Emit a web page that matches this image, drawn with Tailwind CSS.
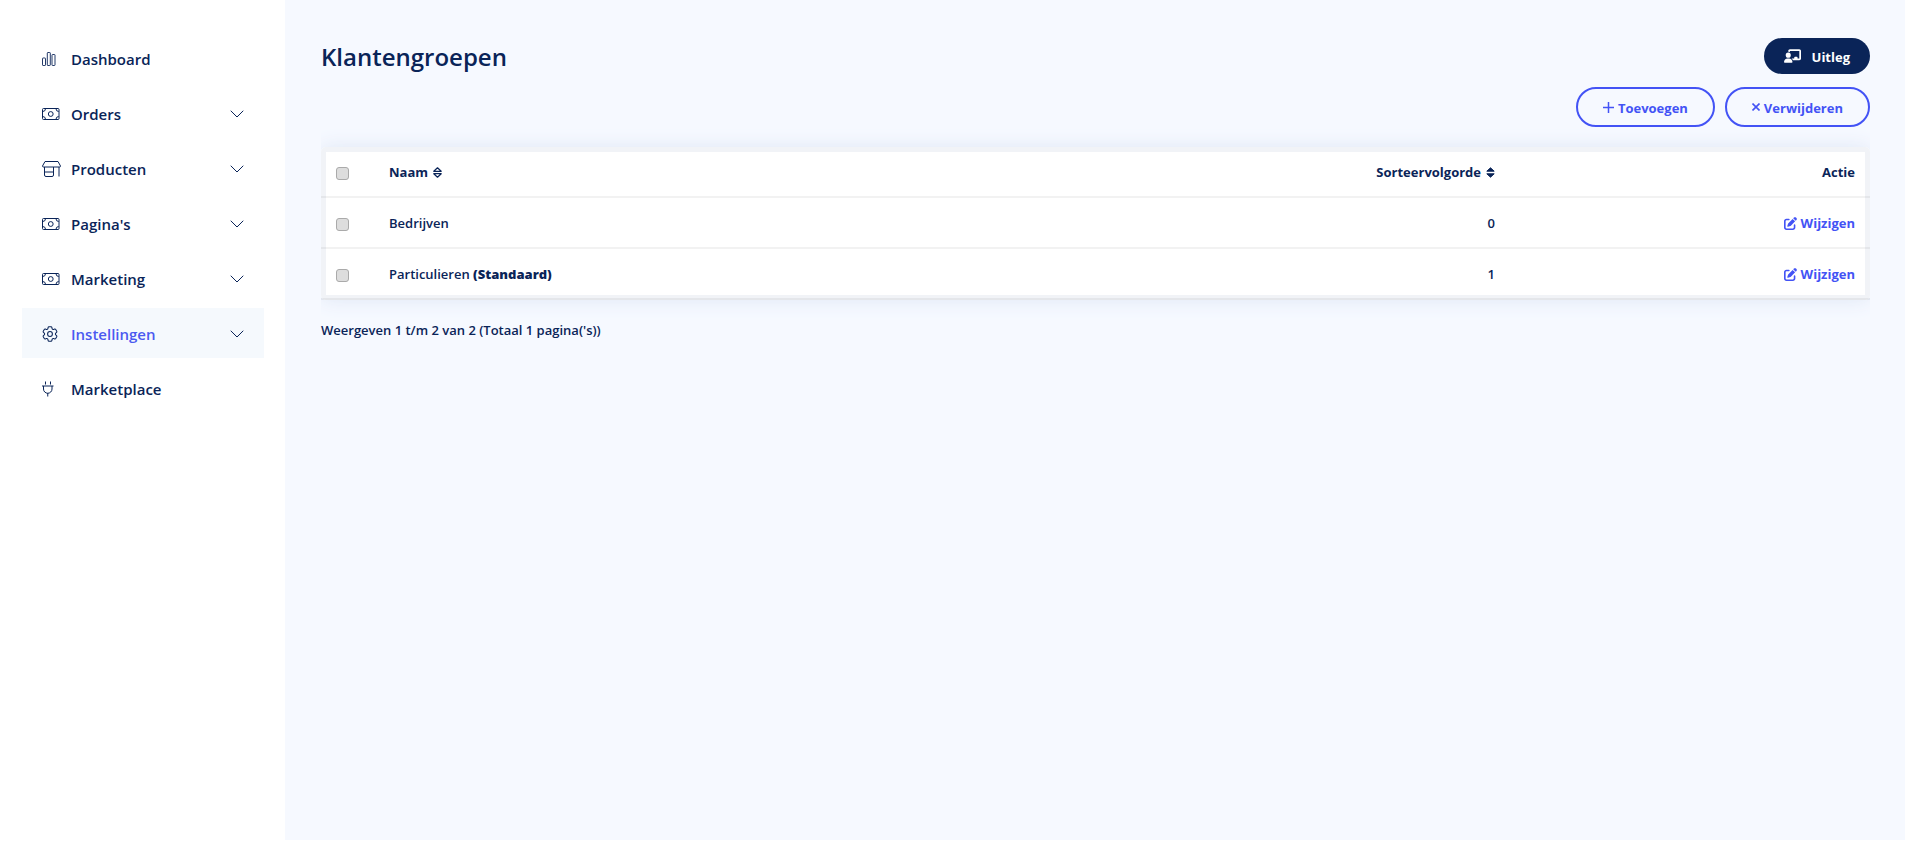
<!DOCTYPE html>
<html lang="nl">
<head>
<meta charset="utf-8">
<meta name="viewport" content="width=device-width, initial-scale=1">
<title>Klantengroepen</title>
<script src="https://cdn.jsdelivr.net/npm/@tailwindcss/browser@4"></script>
</head>
<body class="flex min-h-screen bg-white font-['Open_Sans',sans-serif] text-[13px] font-semibold text-[#0a2458]">
<svg class="hidden" aria-hidden="true">
  <symbol id="chevron" viewBox="0 0 14 8"><path d="M1 1l6 6 6-6" fill="none" stroke="currentColor" stroke-linecap="round" stroke-linejoin="round"/></symbol>
  <symbol id="cash" viewBox="0 0 18 12"><g fill="none" stroke="currentColor"><rect x=".5" y=".5" width="16.5" height="11" rx="1"/><circle cx="8.75" cy="6" r="2.4"/><path d="M3.5.8A2.8 2.8 0 0 1 .8 3.5M14 .8a2.8 2.8 0 0 0 2.7 2.7M3.5 11.2A2.8 2.8 0 0 0 .8 8.500M14 11.200a2.800 2.800 0 0 1 2.700-2.700"/></g></symbol>
  <symbol id="pen" viewBox="0 0 512 512"><path fill="currentColor" d="M471.6 21.7c-21.9-21.9-57.3-21.9-79.2 0L362.300 51.700l97.900 97.900 30.100-30.100c21.900-21.900 21.900-57.300 0-79.200L471.600 21.700zm-299.200 220c-6.100 6.100-10.800 13.600-13.500 21.900l-29.600 88.800c-2.900 8.600-.6 18.100 5.800 24.600s15.900 8.700 24.600 5.800l88.800-29.600c8.200-2.700 15.700-7.400 21.900-13.500L437.700 172.300 339.700 74.300 172.400 241.700zM96 64C43 64 0 107 0 160V416c0 53 43 96 96 96H352c53 0 96-43 96-96V320c0-17.700-14.300-32-32-32s-32 14.300-32 32v96c0 17.700-14.300 32-32 32H96c-17.700 0-32-14.300-32-32V160c0-17.700 14.300-32 32-32h96c17.700 0 32-14.300 32-32s-14.300-32-32-32H96z"/></symbol>
</svg>

<nav class="w-[285px] shrink-0 pt-[33px] pr-[21px] pl-[22px]">
  <ul class="flex flex-col gap-[5px] text-[15px]">
    <li><a href="#" class="flex h-[50px] items-center px-5 pt-[2px]">
      <span class="w-[29px]"><svg class="h-[14px] w-[14px]" viewBox="0 0 14 14" fill="none" stroke="currentColor" stroke-width=".9"><rect x=".5" y="6" width="3" height="7.500" rx=".6"/><rect x="5.300" y=".5" width="3" height="13" rx=".6"/><rect x="10" y="2.500" width="3" height="11" rx=".6"/></svg></span>Dashboard</a></li>
    <li><a href="#" class="flex h-[50px] items-center px-5 pt-[2px]"><span class="w-[29px]"><svg class="h-3 w-[18px]"><use href="#cash"/></svg></span><span class="grow">Orders</span><svg class="h-2 w-[14px]"><use href="#chevron"/></svg></a></li>
    <li><a href="#" class="flex h-[50px] items-center px-5 pt-[2px]">
      <span class="w-[29px]"><svg class="h-4 w-[19px]" viewBox="0 0 19 16" fill="none" stroke="currentColor" stroke-linejoin="round"><path d="M3 .5h13l2.500 4.500q0 1-1 1H1.500q-1 0-1-1zM2.500 6v8q0 1.500 1.500 1.500h6q1.500 0 1.500-1.500V6M2.500 11h9M17 6v9.500"/></svg></span><span class="grow">Producten</span><svg class="h-2 w-[14px]"><use href="#chevron"/></svg></a></li>
    <li><a href="#" class="flex h-[50px] items-center px-5 pt-[2px]"><span class="w-[29px]"><svg class="h-3 w-[18px]"><use href="#cash"/></svg></span><span class="grow">Pagina's</span><svg class="h-2 w-[14px]"><use href="#chevron"/></svg></a></li>
    <li><a href="#" class="flex h-[50px] items-center px-5 pt-[2px]"><span class="w-[29px]"><svg class="h-3 w-[18px]"><use href="#cash"/></svg></span><span class="grow">Marketing</span><svg class="h-2 w-[14px]"><use href="#chevron"/></svg></a></li>
    <li><a href="#" class="flex h-[50px] items-center bg-[#f5f9fd] px-5 pt-[2px]">
      <span class="w-[29px]"><svg class="h-4 w-4" viewBox="2 2 20 20" fill="none" stroke="currentColor" stroke-width="1.300"><path d="M9.594 3.940c.09-.542.56-.94 1.110-.94h2.593c.55 0 1.020.398 1.110.94l.213 1.281c.063.374.313.686.645.87.074.04.147.083.22.127.325.196.72.257 1.075.124l1.217-.456a1.125 1.125 0 0 1 1.370.49l1.296 2.247a1.125 1.125 0 0 1-.26 1.431l-1.003.827c-.293.241-.438.613-.43.992a7.723 7.723 0 0 1 0 .255c-.008.378.137.75.43.991l1.004.827c.424.35.534.955.26 1.430l-1.298 2.247a1.125 1.125 0 0 1-1.369.491l-1.217-.456c-.355-.133-.75-.072-1.076.124a6.470 6.470 0 0 1-.22.128c-.331.183-.581.495-.644.869l-.213 1.281c-.09.543-.56.94-1.110.94h-2.594c-.55 0-1.019-.398-1.110-.94l-.213-1.281c-.062-.374-.312-.686-.644-.87a6.520 6.520 0 0 1-.22-.127c-.325-.196-.72-.257-1.076-.124l-1.217.456a1.125 1.125 0 0 1-1.369-.49l-1.297-2.247a1.125 1.125 0 0 1 .26-1.431l1.004-.827c.292-.24.437-.613.43-.991a6.932 6.932 0 0 1 0-.255c.007-.38-.138-.751-.43-.992l-1.004-.827a1.125 1.125 0 0 1-.26-1.430l1.297-2.247a1.125 1.125 0 0 1 1.370-.491l1.216.456c.356.133.751.072 1.076-.124.072-.044.146-.086.22-.128.332-.183.582-.495.644-.869l.214-1.280Z"/><circle cx="12" cy="12" r="3"/></svg></span><span class="grow text-[#4b5af0]">Instellingen</span><svg class="h-2 w-[14px]"><use href="#chevron"/></svg></a></li>
    <li><a href="#" class="flex h-[50px] items-center px-5 pt-[2px]">
      <span class="w-[29px]"><svg class="h-4 w-3" viewBox="0 0 12 16" fill="none" stroke="currentColor"><path d="M3.500.5v3M8.500.5v3M0 5h11.500M1.500 5v3a4.200 4.200 0 0 0 8.500 0V5M5.750 12v3.500"/></svg></span>Marketplace</a></li>
  </ul>
</nav>

<main class="mb-[23px] min-w-0 grow bg-[#f6f9ff] pt-[38px] pr-[35px] pl-9">
  <header class="flex h-9 items-center justify-between">
    <h1 class="pt-[2px] text-2xl font-semibold">Klantengroepen</h1>
    <a href="#" class="flex h-9 items-center gap-[11px] rounded-full bg-[#0a2458] px-5 font-bold text-white"><svg class="h-[14px] w-[17px]" viewBox="0 0 640 512" fill="currentColor"><path d="M160 64c0-35.300 28.700-64 64-64H576c35.300 0 64 28.700 64 64V352c0 35.300-28.700 64-64 64H336.800c-11.800-25.500-29.900-47.500-52.400-64H384V320c0-17.700 14.300-32 32-32h64c17.700 0 32 14.300 32 32v32h64V64L224 64v49.100C205.200 102.200 183.300 96 160 96V64zm0 64a96 96 0 1 1 0 192 96 96 0 1 1 0-192zM133.300 352h53.300C260.300 352 320 411.700 320 485.300c0 14.700-11.900 26.700-26.700 26.700H26.700C11.900 512 0 500.100 0 485.300C0 411.700 59.700 352 133.300 352z"/></svg><span class="pt-[3px]">Uitleg</span></a>
  </header>
  <div class="mt-[13px] flex justify-end gap-[10px] font-bold text-[#4353f5]">
    <button type="button" class="flex h-10 items-center gap-1 rounded-full border-2 border-current px-[25px]"><svg class="h-[11px] w-[11px]" viewBox="0 0 11 11" stroke="currentColor" stroke-width="1.500"><path d="M5.500 0v11M0 5.500h11"/></svg><span class="pt-[3px]">Toevoegen</span></button>
    <button type="button" class="flex h-10 items-center gap-1 rounded-full border-2 border-current px-[25px]"><svg class="h-2 w-2" viewBox="0 0 8 8" stroke="currentColor" stroke-width="1.600"><path d="M.5.5l7 7M7.500.5l-7 7"/></svg><span class="pt-[3px]">Verwijderen</span></button>
  </div>
  <div class="overflow-hidden pt-5 pb-5">
    <table class="w-full table-fixed border-separate border-spacing-0 rounded-[5px] bg-white shadow-[0_0_20px_#dfe7f5,inset_0_0_0_5px_#f1f3f7]">
      <thead>
        <tr class="h-[51px]">
          <th class="w-[53px] border-b-2 border-black/5 pt-[3px] pl-[15px] text-left"><input type="checkbox" aria-label="Alles selecteren" class="block h-[13px] w-[13px] appearance-none rounded-[3px] border border-[#aaa] bg-[#ddd]"></th>
          <th class="border-b-2 border-black/5 px-[15px] pt-[3px] text-left font-bold"><a href="#" class="flex items-center gap-[5px]">Naam <svg class="mb-[2px] h-[11px] w-[9px]" viewBox="0 0 9 11" fill="none" stroke="currentColor" stroke-width="1.200" stroke-linejoin="round"><path d="M.8 4.300h7.400L4.500.8zM.8 6.700h7.400l-3.700 3.500z"/></svg></a></th>
          <th class="border-b-2 border-black/5 px-[15px] pt-[3px] font-bold"><a href="#" class="flex items-center justify-end gap-[5px]">Sorteervolgorde <svg class="mb-[2px] h-[11px] w-[9px]" viewBox="0 0 9 11" fill="currentColor" stroke="currentColor" stroke-linejoin="round"><path d="M.8 4.200h7.400L4.500.8zM.8 6.800h7.400l-3.700 3.400z"/></svg></a></th>
          <th class="w-[360px] border-b-2 border-black/5 px-[15px] pt-[3px] text-right font-bold">Actie</th>
        </tr>
      </thead>
      <tbody>
        <tr class="h-[51px]">
          <td class="border-b-2 border-black/5 pt-[3px] pl-[15px]"><input type="checkbox" aria-label="Bedrijven selecteren" class="block h-[13px] w-[13px] appearance-none rounded-[3px] border border-[#aaa] bg-[#ddd]"></td>
          <td class="border-b-2 border-black/5 px-[15px] pt-[3px]">Bedrijven</td>
          <td class="border-b-2 border-black/5 px-[15px] pt-[3px] text-right">0</td>
          <td class="border-b-2 border-black/5 px-[15px] pt-[3px]"><a href="#" class="flex items-center justify-end gap-1 font-bold text-[#4353f5]"><svg class="mb-[2px] h-[13px] w-[13px]"><use href="#pen"/></svg>Wijzigen</a></td>
        </tr>
        <tr class="h-[51px]">
          <td class="border-b-2 border-black/5 pt-[3px] pl-[15px]"><input type="checkbox" aria-label="Particulieren selecteren" class="block h-[13px] w-[13px] appearance-none rounded-[3px] border border-[#aaa] bg-[#ddd]"></td>
          <td class="border-b-2 border-black/5 px-[15px] pt-[3px]">Particulieren <b class="font-extrabold">(Standaard)</b></td>
          <td class="border-b-2 border-black/5 px-[15px] pt-[3px] text-right">1</td>
          <td class="border-b-2 border-black/5 px-[15px] pt-[3px]"><a href="#" class="flex items-center justify-end gap-1 font-bold text-[#4353f5]"><svg class="mb-[2px] h-[13px] w-[13px]"><use href="#pen"/></svg>Wijzigen</a></td>
        </tr>
      </tbody>
    </table>
  </div>
  <p class="leading-5">Weergeven 1 t/m 2 van 2 (Totaal 1 pagina('s))</p>
</main>
</body>
</html>
